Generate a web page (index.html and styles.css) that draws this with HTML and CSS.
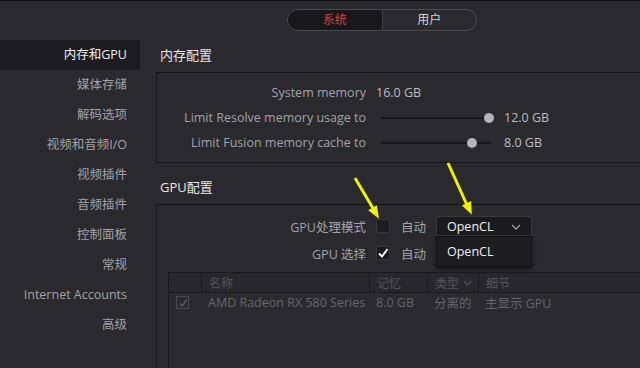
FILE: index.html
```html
<!DOCTYPE html>
<html lang="zh-CN">
<head>
    <meta charset="UTF-8">
    <meta name="viewport" content="width=device-width, initial-scale=1.0">
    <title>偏好设置 | 系统</title>
    <link rel="stylesheet" href="styles.css">
</head>
<body>

    <header class="topbar">
        <div class="tabs">
            <span class="tab active">系统</span>
            <span class="tab">用户</span>
        </div>
    </header>

    <div class="layout">
        <nav class="sidebar">
            <a class="nav-item active">内存和GPU</a>
            <a class="nav-item">媒体存储</a>
            <a class="nav-item">解码选项</a>
            <a class="nav-item">视频和音频I/O</a>
            <a class="nav-item">视频插件</a>
            <a class="nav-item">音频插件</a>
            <a class="nav-item">控制面板</a>
            <a class="nav-item">常规</a>
            <a class="nav-item">Internet Accounts</a>
            <a class="nav-item">高级</a>
        </nav>

        <main class="content">
            <h2 class="section-title">内存配置</h2>
            <div class="panel">
                <div class="row">
                    <span class="label">System memory</span>
                    <span class="value">16.0 GB</span>
                </div>
                <div class="row">
                    <span class="label">Limit Resolve memory usage to</span>
                    <div class="slider"><span class="knob" style="left: 108px;"></span></div>
                    <span class="value">12.0 GB</span>
                </div>
                <div class="row">
                    <span class="label">Limit Fusion memory cache to</span>
                    <div class="slider"><span class="knob" style="left: 91px;"></span></div>
                    <span class="value">8.0 GB</span>
                </div>
            </div>

            <h2 class="section-title gap">GPU配置</h2>
            <div class="panel gpu">
                <div class="row tight">
                    <span class="label">GPU处理模式</span>
                    <span class="check"></span>
                    <span class="auto">自动</span>
                    <div class="dropdown">
                        <span>OpenCL</span>
                        <svg class="chevron" width="10" height="6" viewBox="0 0 10 6"><polyline points="1,1 5,5 9,1" fill="none" stroke="#9a9aa0" stroke-width="1.3"/></svg>
                        <div class="menu"><span>OpenCL</span></div>
                    </div>
                </div>
                <div class="row tight second">
                    <span class="label">GPU 选择</span>
                    <span class="check on">
                        <svg width="12" height="12" viewBox="0 0 12 12"><polyline points="2,6.5 5,9.5 10.5,2" fill="none" stroke="#ffffff" stroke-width="2"/></svg>
                    </span>
                    <span class="auto">自动</span>
                </div>

                <div class="gpu-table">
                    <div class="tr head">
                        <span class="td c-check"></span>
                        <span class="td c-name">名称</span>
                        <span class="td c-mem">记忆</span>
                        <span class="td c-type">类型
                            <svg width="9" height="6" viewBox="0 0 10 6"><polyline points="1,1 5,5 9,1" fill="none" stroke="#55555b" stroke-width="1.3"/></svg>
                        </span>
                        <span class="td c-detail">细节</span>
                    </div>
                    <div class="tr">
                        <span class="td c-check">
                            <span class="mini-check">
                                <svg width="10" height="10" viewBox="0 0 12 12"><polyline points="2,6.5 5,9.5 10.5,2" fill="none" stroke="#5e5e64" stroke-width="1.6"/></svg>
                            </span>
                        </span>
                        <span class="td c-name">AMD Radeon RX 580 Series</span>
                        <span class="td c-mem">8.0 GB</span>
                        <span class="td c-type">分离的</span>
                        <span class="td c-detail">主显示 GPU</span>
                    </div>
                </div>
            </div>
        </main>
    </div>

    <!-- 标注箭头 -->
    <svg class="arrows" width="640" height="368" viewBox="0 0 640 368">
        <line x1="355" y1="178" x2="374" y2="210" stroke="#f2f000" stroke-width="3"/>
        <polygon points="369.5,210.4 376.3,206.4 378,217" fill="#f2f000" stroke="#f2f000" stroke-width="1.5"/>
        <line x1="448" y1="163" x2="467" y2="205" stroke="#f2f000" stroke-width="3"/>
        <polygon points="463.2,205.6 470.5,202.2 471,213" fill="#f2f000" stroke="#f2f000" stroke-width="1.5"/>
    </svg>
</body>
</html>
```

FILE: styles.css
```css
:root {
    --bg-main: #29292e;
    --bg-dark: #1c1c20;
    --line: #141417;
    --text-primary: #e6e6e8;
    --text-secondary: #a3a3a8;
    --text-dim: #66666b;
    --accent-red: #dd3b3b;
}

* { box-sizing: border-box; margin: 0; padding: 0; }
html, body { width: 640px; height: 368px; overflow: hidden; }
body { background: var(--bg-main); color: var(--text-primary); font-family: "Open Sans", "Noto Sans CJK SC", sans-serif; font-size: 12.5px; position: relative; }

.topbar { height: 40px; border-top: 1px solid #0e0e10; padding: 8px 0 0 287px; }
.tabs { display: flex; width: 190px; height: 22px; border: 1px solid #4a4a50; border-radius: 11px; overflow: hidden; }
.tab { flex: 1; text-align: center; line-height: 20px; font-size: 12px; color: #d6d6da; }
.tab.active { background: #18181b; color: var(--accent-red); border-right: 1px solid #3c3c42; }

.layout { display: flex; height: 328px; overflow: hidden; }
.sidebar { width: 140px; flex-shrink: 0; display: flex; flex-direction: column; }
.nav-item { height: 30px; line-height: 30px; text-align: right; padding-right: 13px; color: var(--text-secondary); white-space: nowrap; }
.nav-item.active { background: var(--bg-dark); color: #f0f0f2; }

.content { flex: 1; padding-left: 16px; margin-right: -30px; }
.section-title { height: 32px; line-height: 30px; padding-left: 4px; font-size: 13px; font-weight: 400; color: var(--text-primary); }
.section-title.gap { margin-top: 9px; }

.panel { border: 1px solid var(--line); padding: 7px 0 7px 0; }
.panel.gpu { padding-top: 11px; height: 164px; border-bottom: none; }

.row { display: flex; align-items: center; height: 25px; }
.row.tight { height: 20px; }
.row.second { margin-top: 7px; }
.label { width: 209px; margin-right: 10px; text-align: right; color: var(--text-secondary); white-space: nowrap; }
.value { color: #bdbdc2; white-space: nowrap; }

.slider { position: relative; width: 110px; height: 2px; background: #17171a; margin: 0 13px 0 5px; }
.knob { position: absolute; top: -4px; width: 10px; height: 10px; margin-left: -5px; border-radius: 50%; background: #b4b4b8; }

.check { width: 14px; height: 14px; background: #1d1d20; border: 1px solid #37373c; border-radius: 2px; display: flex; align-items: center; justify-content: center; }
.check.on { background: #19191c; }
.auto { width: 35px; margin-left: 11px; color: var(--text-secondary); }

.dropdown { position: relative; width: 96px; height: 20px; background: #1b1b1e; border: 1px solid #3a3a3f; border-radius: 2px; display: flex; align-items: center; justify-content: space-between; padding: 0 10px 0 10px; color: #f2f2f4; }
.dropdown .chevron { margin-top: 1px; }
.menu { position: absolute; top: 19px; left: -1px; width: 96px; height: 31px; background: #1d1d20; border: 1px solid #111113; box-shadow: 0 2px 4px rgba(0, 0, 0, 0.5); display: flex; align-items: center; padding-left: 10px; z-index: 2; }

.gpu-table { margin: 9px 0 0 11px; border: 1px solid #1a1a1d; border-bottom: none; background: #2a2a2f; height: 96px; }
.tr { display: flex; height: 19px; align-items: center; color: var(--text-dim); white-space: nowrap; }
.tr.head { height: 20px; background: #28282c; border-bottom: 1px solid #1a1a1d; color: #55555a; font-size: 12px; }
.td { padding-left: 7px; height: 100%; display: flex; align-items: center; }
.tr.head .td { border-left: 1px solid #1d1d20; }
.tr.head .td:first-child { border-left: none; }
.c-check { width: 32px; padding-left: 7px; }
.c-name { width: 168px; }
.c-mem { width: 58px; }
.c-type { width: 51px; justify-content: space-between; padding-right: 6px; }
.c-detail { flex: 1; }
.mini-check { width: 13px; height: 13px; border: 1px solid #4a4a50; display: flex; align-items: center; justify-content: center; }

.arrows { position: absolute; left: 0; top: 0; pointer-events: none; z-index: 5; }
```
